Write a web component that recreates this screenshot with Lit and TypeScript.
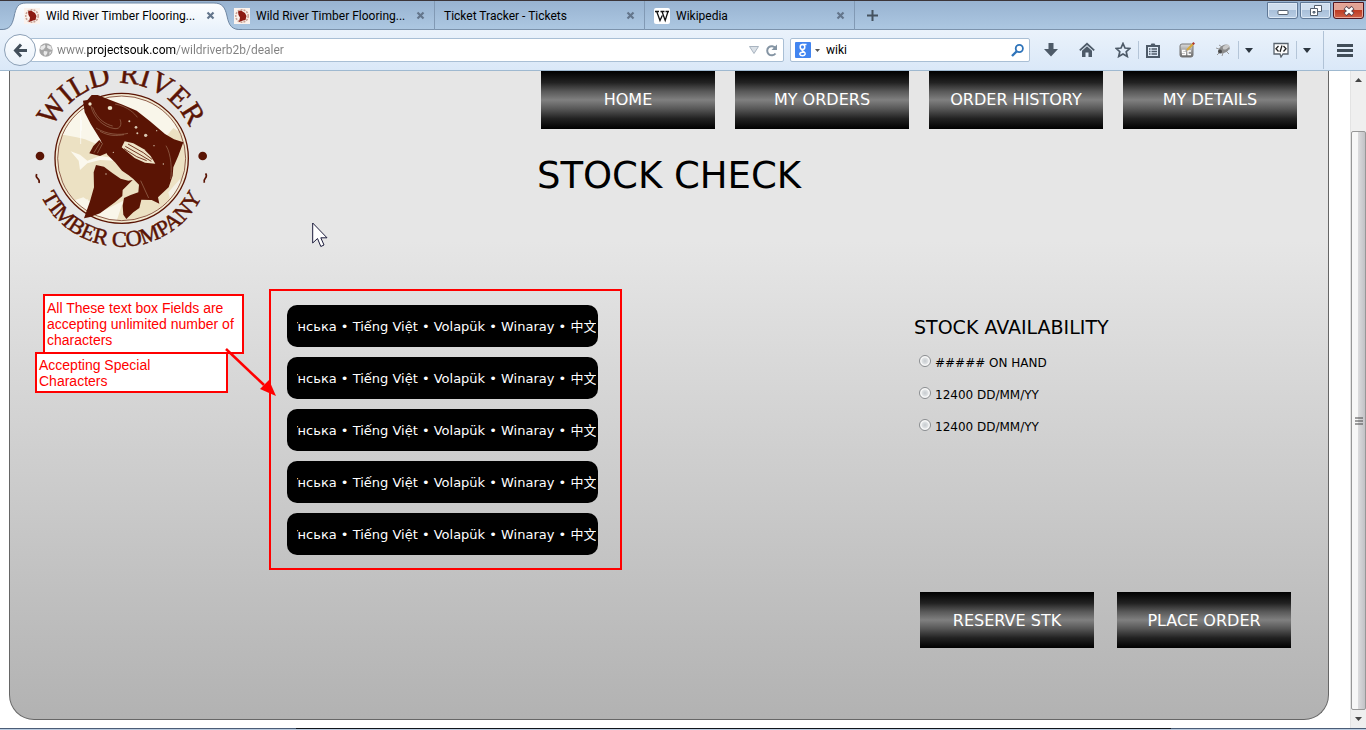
import { LitElement, html, css } from "lit";
import { customElement, state } from "lit/decorators.js";
import { styleMap } from "lit/directives/style-map.js";

const FIELD_VALUE = "Українська • Tiếng Việt • Volapük • Winaray • 中文";
const ADDRESS = ["www.", "projectsouk.com", "/wildriverb2b/dealer"];

const fishIcon = html`<svg class="favicon" viewBox="0 0 16 16" aria-hidden="true">
  <rect width="16" height="16" fill="#fbf3ee" />
  <circle cx="8" cy="8" r="6.2" fill="none" stroke="#c9a294" stroke-width="1.6" stroke-dasharray="2 1" />
  <path d="M4 3.500L7 2.500L11 5L12.500 8L11.500 12L9 12.500L5 14L6 9.500L4.500 7Z" fill="#8c1a12" />
</svg>`;

const wikiIcon = html`<svg class="favicon" viewBox="0 0 16 16" aria-hidden="true">
  <rect width="16" height="16" rx="2" fill="#fff" />
  <path d="M1 3.500H5M6.500 3.500H10.500M11.500 3.500H15M2.700 3.500L6 12.500L8.300 7.500M8 3.500L11.200 12.500L14 3.500" fill="none" stroke="#111" stroke-width="1.300" />
</svg>`;

const closeGlyph = html`<svg width="9" height="9" viewBox="0 0 9 9" aria-hidden="true">
  <path d="M1.500 1.500L7.500 7.500M7.500 1.500L1.500 7.500" stroke="#64768c" stroke-width="2.200" />
</svg>`;

@customElement("browser-tabs")
class BrowserTabs extends LitElement {
  static styles = css`
    :host {
      display: block;
      font: 12px/16px Roboto, "Noto Sans", sans-serif;
      color: #000;
    }
    * { box-sizing: border-box; }
    button { font: inherit; color: inherit; background: none; border: 0; padding: 0; }
    .strip {
      display: flex;
      height: 30px;
      padding: 0 2px 0 15px;
      border-top: 1px solid #3b3539;
      background: linear-gradient(#98b3d1, #adc8e2);
      box-shadow: inset 0 -1px #7c93ac;
    }
    .tab {
      display: flex;
      align-items: center;
      position: relative;
      width: 210px;
      padding: 0 10px 0 9px;
    }
    .tab.divided { box-shadow: inset -1px 0 #8199b4; }
    .shape { position: absolute; left: -15px; top: 1px; }
    .favicon { width: 16px; height: 16px; margin-right: 6px; flex: none; }
    .title {
      position: relative;
      display: flex;
      align-items: center;
      flex: 1;
      min-width: 0;
      text-align: left;
      white-space: nowrap;
    }
    .close { position: relative; display: flex; }
    .new { display: flex; align-items: center; padding: 0 12px; }
    .window { display: flex; gap: 2px; margin-left: auto; padding-top: 1px; align-items: flex-start; }
    .win {
      display: grid;
      place-items: center;
      width: 31px;
      height: 17px;
      border: 1px solid #5f7896;
      border-radius: 0 0 3px 3px;
      background: linear-gradient(#cfdeee 45%, #a9c0da 50%, #b9cee5);
      box-shadow: inset 0 0 0 1px #dce8f5;
    }
    .win.exit {
      border-color: #501620;
      background: linear-gradient(#e2a395 45%, #bf3b23 50%, #cf6148);
      box-shadow: inset 0 0 0 1px #eba89a;
    }
  `;

  private tab(title: string, icon: unknown, active = false, divided = true) {
    return html`<div class="tab ${divided ? "divided" : ""}">
      ${active
        ? html`<svg class="shape" width="242" height="28" viewBox="0 0 242 28" aria-hidden="true">
            <defs><linearGradient id="tabfill" x2="0" y2="1">
              <stop stop-color="#fdfeff" /><stop offset="1" stop-color="#e9f2fb" />
            </linearGradient></defs>
            <path d="M0 28C10 28 12 23 14 15C16 5 18 1 26 1H214C222 1 225 5 227 14C229 24 232 28 242 28Z" fill="url(#tabfill)" />
            <path d="M0 27.500C10 28 12 23 14 15C16 5 18 1 26 1H214C222 1 225 5 227 14C229 24 232 28 242 27.500" fill="none" stroke="#6f87a3" />
          </svg>`
        : ""}
      <button class="title">${icon}${title}</button>
      <button class="close" aria-label="Close tab">${closeGlyph}</button>
    </div>`;
  }

  render() {
    return html`<div class="strip">
      ${this.tab("Wild River Timber Flooring...", fishIcon, true, false)}
      ${this.tab("Wild River Timber Flooring...", fishIcon)}
      ${this.tab("Ticket Tracker - Tickets", "")}
      ${this.tab("Wikipedia", wikiIcon)}
      <button class="new" aria-label="New tab">
        <svg width="11" height="11" viewBox="0 0 11 11"><path d="M5.500 0V11M0 5.500H11" stroke="#45525f" stroke-width="2" /></svg>
      </button>
      <div class="window">
        <button class="win" aria-label="Minimize">
          <svg width="12" height="9" viewBox="0 0 12 9"><rect x="1" y="4.500" width="10" height="4" rx="1" fill="#fff" stroke="#55606e" /></svg>
        </button>
        <button class="win" aria-label="Restore">
          <svg width="12" height="11" viewBox="0 0 12 11" fill="#fff" stroke="#55606e">
            <path d="M4.500 .5H11.500V6.500H4.500Z" /><path d="M.5 3.500H7.500V10.500H.5Z" /><path d="M3 6.500H5V8H3Z" fill="#8ea6c0" />
          </svg>
        </button>
        <button class="win exit" aria-label="Close">
          <svg width="12" height="10" viewBox="0 0 12 10">
            <path d="M2 1.500L10 8.500M10 1.500L2 8.500" stroke="#5c4650" stroke-width="4.500" />
            <path d="M2.500 2L9.500 8M9.500 2L2.500 8" stroke="#fff" stroke-width="2.500" />
          </svg>
        </button>
      </div>
    </div>`;
  }
}

@customElement("browser-toolbar")
class BrowserToolbar extends LitElement {
  static styles = css`
    :host {
      display: block;
      position: relative;
      z-index: 2;
      font: 12px/16px Roboto, "Noto Sans", sans-serif;
    }
    * { box-sizing: border-box; }
    button { background: none; border: 0; padding: 0; display: flex; }
    .bar {
      display: flex;
      align-items: center;
      height: 41px;
      padding: 0 13px 0 4px;
      border-bottom: 1px solid #9fb9d0;
      background: linear-gradient(#eaf2fb, #dae8f8);
    }
    .back {
      position: relative;
      z-index: 1;
      align-items: center;
      justify-content: center;
      width: 32px;
      height: 32px;
      border: 1px solid #8ca0b6;
      border-radius: 50%;
      background: linear-gradient(#fdfeff, #e9f1fa);
    }
    .box {
      display: flex;
      align-items: center;
      height: 24px;
      border: 1px solid #a9bfd5;
      border-radius: 2px;
      background: #fff;
    }
    .location { flex: 1; margin-left: -6px; padding: 0 5px 0 8px; }
    .search { width: 240px; margin-left: 6px; padding: 0 5px 0 4px; }
    .text {
      flex: 1;
      min-width: 0;
      border: 0;
      padding: 0;
      outline: 0;
      height: 20px;
      font: inherit;
      background: none;
      color: #000;
    }
    .address {
      margin-left: 4px;
      color: transparent;
      background: linear-gradient(90deg, #808080 var(--from), #000 var(--from), #000 var(--to), #808080 var(--to));
      -webkit-background-clip: text;
      background-clip: text;
    }
    .reload { margin-left: 6px; }
    .engine { margin-right: 6px; align-items: center; gap: 4px; }
    .tools { display: flex; align-items: center; padding-left: 13px; }
    .tool { width: 16px; justify-content: center; margin-right: 20px; }
    .tool.snug { margin-right: 7px; }
    .tool.near { margin-right: 18px; }
    .rule { width: 1px; height: 18px; background: #b4c5d8; margin-right: 6px; }
    .drop { margin-right: 20px; }
    .drop.last { margin-right: 12px; }
    .menu { padding-left: 13px; height: 38px; align-items: center; border-left: 1px solid #b0c2d6; }
  `;

  @state() private from = 0;
  @state() private to = 0;

  connectedCallback() {
    super.connectedCallback();
    const pen = document.createElement("canvas").getContext("2d")!;
    pen.font = '12px Roboto, "Noto Sans", sans-serif';
    this.from = pen.measureText(ADDRESS[0]).width;
    this.to = pen.measureText(ADDRESS[0] + ADDRESS[1]).width;
  }

  render() {
    const ink = "#4d5a68";
    return html`<div class="bar">
      <button class="back" aria-label="Back">
        <svg width="15" height="15" viewBox="0 0 15 15" fill="none" stroke="#434f5b" stroke-width="3"><path d="M8 1.500L2.500 7.500L8 13.500M3 7.500H14" /></svg>
      </button>
      <div class="box location">
        <svg width="14" height="14" viewBox="0 0 14 14" aria-hidden="true">
          <circle cx="7" cy="7" r="6.700" fill="#a5a5a5" />
          <path d="M2 3.500L6 1.500L6.500 4L4.500 6.500L2.500 7L1 5.500ZM8.500 2L12 3.500L13 7L10 6L8 4.500ZM5 8L8.500 8.500L8 11L6 13L4.500 10.500ZM10.500 9L12.500 8.500L10.500 12Z" fill="#e9e9e9" />
        </svg>
        <input
          class="text address"
          aria-label="Address"
          .value=${ADDRESS.join("")}
          style=${styleMap({ "--from": `${this.from}px`, "--to": `${this.to}px` })}
        />
        <svg width="10" height="8" viewBox="0 0 10 8" aria-hidden="true"><path d="M.5 .5H9.500L5 7.500Z" fill="#dbe1e7" stroke="#a9b4c0" /></svg>
        <button class="reload" aria-label="Reload">
          <svg width="13" height="13" viewBox="0 0 13 13"><path d="M10.500 4A4.600 4.600 0 1 0 10.500 9.500" fill="none" stroke="#8494a3" stroke-width="2" /><path d="M12 .5V6H6.500Z" fill="#8494a3" /></svg>
        </button>
      </div>
      <div class="box search">
        <button class="engine" aria-label="Search engine">
          <svg width="16" height="16" viewBox="0 0 16 16">
            <rect width="16" height="16" rx="1" fill="#4285f0" />
            <g fill="none" stroke="#fff" stroke-width="1.500"><ellipse cx="7.500" cy="5" rx="2.300" ry="2.500" /><path d="M7.500 2.500H11.500M8 7.500C6 8.500 7.500 9 9 9.800C11 11 10.500 13.700 7.500 13.700C4.500 13.700 4 11.500 6 10.500C7 10 8 10 9 10" /></g>
          </svg>
          <svg width="5" height="3" viewBox="0 0 5 3"><path d="M0 0H5L2.500 3Z" fill="#555" /></svg>
        </button>
        <input class="text" aria-label="Search" value="wiki" />
        <button aria-label="Go">
          <svg width="13" height="13" viewBox="0 0 13 13" fill="none" stroke="#2f74ba"><circle cx="8.300" cy="4.500" r="3.600" stroke-width="1.800" /><path d="M5.500 7.500L1 12" stroke-width="2.400" /></svg>
        </button>
      </div>
      <div class="tools">
        <button class="tool" aria-label="Downloads"><svg width="14" height="14" viewBox="0 0 14 14"><path d="M4.500 0H9.500V6H14L7 13.500L0 6H4.500Z" fill="${ink}" /></svg></button>
        <button class="tool" aria-label="Home"><svg width="16" height="16" viewBox="0 0 16 16"><path d="M.8 8.300L8 1.800L15.200 8.300" fill="none" stroke="${ink}" stroke-width="1.800" /><path d="M3 8.800L8 4.300L13 8.800V15H9.500V10.500H6.500V15H3Z" fill="${ink}" /></svg></button>
        <button class="tool snug" aria-label="Bookmark"><svg width="16" height="16" viewBox="0 0 16 16"><path d="M8 1.500L10 6L14.800 6.500L11.200 9.700L12.300 14.500L8 12L3.700 14.500L4.800 9.700L1.200 6.500L6 6Z" fill="none" stroke="${ink}" stroke-width="1.700" /></svg></button>
        <span class="rule"></span>
        <button class="tool near" aria-label="Bookmarks list"><svg width="14" height="15" viewBox="0 0 14 15"><path d="M1 3H13V14H1Z" fill="none" stroke="${ink}" stroke-width="2" /><path d="M4 3L5.500 .5H8.500L10 3Z" fill="${ink}" /><path d="M3 6H4.500M5.500 6H11M3 8.500H4.500M5.500 8.500H11M3 11H4.500M5.500 11H11" stroke="${ink}" stroke-width="1.400" /></svg></button>
        <button class="tool" aria-label="Script editor"><svg width="16" height="16" viewBox="0 0 16 16">
          <defs><linearGradient id="sc" x2="0" y2="1"><stop stop-color="#ddd" /><stop offset="1" stop-color="#666" /></linearGradient></defs>
          <rect x="1" y="2" width="13" height="13" rx="2" fill="url(#sc)" stroke="#777" />
          <path d="M6.500 8.500H3.500V10.500H6.500V12.500H3M12 9H9V12.500H12" fill="none" stroke="#fff" stroke-width="1.300" />
          <path d="M8 8L14.500 1.500" stroke="#d8a93c" stroke-width="2.200" /><path d="M13.800 2.200L15.200 .8" stroke="#a33" stroke-width="2.200" />
        </svg></button>
        <button class="tool snug" aria-label="Firebug"><svg width="16" height="14" viewBox="0 0 16 14">
          <path d="M4 6L1 5M5 9L2 12M8 10L7 13M11 8L14 11M12 5L15 6M7 4L4 2" stroke="#999" />
          <ellipse cx="9" cy="6" rx="6" ry="3.800" fill="#8c8c8c" transform="rotate(-30 9 6)" />
          <ellipse cx="11" cy="4" rx="3.500" ry="2" fill="#c9c9c9" transform="rotate(-30 11 4)" /><circle cx="5" cy="8.500" r="2" fill="#4b4b4b" />
        </svg></button>
        <span class="rule"></span>
        <button class="drop" aria-label="Firebug menu"><svg width="8" height="5" viewBox="0 0 8 5"><path d="M0 0H8L4 5Z" fill="#2c3640" /></svg></button>
        <button class="tool snug" aria-label="Developer tools"><svg width="16" height="16" viewBox="0 0 16 16"><path d="M1 1.500H15V12H10L8 15L7 12H1Z" fill="#fff" stroke="#59636d" stroke-width="1.300" /><path d="M5.500 4L3 6.800L5.500 9.500M10.500 4L13 6.800L10.500 9.500M9 3.500L7 10" fill="none" stroke="#222" stroke-width="1.300" /></svg></button>
        <span class="rule"></span>
        <button class="drop last" aria-label="Developer menu"><svg width="8" height="5" viewBox="0 0 8 5"><path d="M0 0H8L4 5Z" fill="#2c3640" /></svg></button>
        <button class="menu" aria-label="Menu"><svg width="16" height="13" viewBox="0 0 16 13"><path d="M0 1.500H16M0 6.500H16M0 11.500H16" stroke="#414d59" stroke-width="3" /></svg></button>
      </div>
    </div>`;
  }
}

@customElement("company-logo")
class CompanyLogo extends LitElement {
  static styles = css`
    :host { display: block; }
    .logo { display: block; width: 180px; height: 180px; overflow: visible; }
    .name { font-family: "Liberation Serif", serif; font-size: 88px; }
    .kind { font-family: "Liberation Serif", serif; font-size: 67px; }
  `;

  render() {
    return html`<svg class="logo" viewBox="90 21 540 540" role="img" aria-label="Wild River Timber Company">
      <defs>
        <path id="upper" d="M148 349A225 225 0 1 1 578 349" />
        <path id="lower" d="M97 280A268 268 0 0 0 633 280" />
        <clipPath id="disc"><ellipse cx="365" cy="283" rx="191" ry="186" /></clipPath>
      </defs>
      <ellipse cx="365" cy="283" rx="200" ry="195" fill="#f3ead2" stroke="#5a1404" stroke-width="4" />
      <g clip-path="url(#disc)">
        <ellipse cx="365" cy="283" rx="191" ry="186" fill="#f9f6ea" />
        <path d="M160 232L190 212L230 220L255 226L290 240L360 232L400 250L500 215L520 192L540 205L580 250V360L540 430L470 462L380 482L350 470L370 410L310 440L250 400L190 420L160 330Z" fill="#ece1c3" />
        <path d="M212 262L240 272L262 290L300 276L340 282L350 290L300 288L262 298L240 318L236 290Z" fill="#fbf8ee" />
        <path d="M205 430L265 405L240 470Z" fill="#f9f6ea" />
        <path d="M540 345L505 385L515 425L550 390Z" fill="#f4f1e6" />
      </g>
      <ellipse cx="365" cy="283" rx="192" ry="187" fill="none" stroke="#5a1404" stroke-width="2" />
      <path d="M249 110L262 108L275 93L293 93L325 106L368 122L410 140L450 172L495 210L522 226L550 235L535 275L520 310L518 335L506 370L474 400L478 419L455 408L424 407L418 432L400 445L379 465L370 452L368 425L372 402L392 393L415 385L417 362L400 345L386 334L366 320L345 295L322 272L300 225L272 180L254 145Z" fill="#5a1404" />
      <path d="M288 303L312 308L338 328L362 344L385 350L398 348L368 378L367 396L345 415L300 448L270 459L252 463L270 412L282 370L281 325Z" fill="#5a1404" />
      <path d="M298 228L280 246L268 268L300 276L328 264Z" fill="#5a1404" />
      <path d="M365 250L374 232L400 238L432 256L452 276L466 299L435 296L404 282Z" fill="#efe4c8" />
      <path d="M376 247L420 272L454 292M372 254L410 278L440 290M384 240L430 266L456 286" fill="none" stroke="#5a1404" stroke-width="2.500" />
      <ellipse cx="330" cy="132" rx="7" ry="6" fill="#efe4c8" />
      <circle cx="270" cy="120" r="5" fill="#efe4c8" />
      <g fill="none" stroke="#9c6f58" stroke-width="2">
        <path d="M273 126C280 160 310 190 345 194C362 195 366 180 360 166M278 130C292 168 320 182 338 186M288 192C320 212 360 214 384 208M300 202C330 218 350 215 372 212M345 120C385 128 405 150 412 160" />
        <path d="M498 245C514 270 516 320 512 345M422 350L446 402M300 236L282 266M308 238L292 268" />
      </g>
      <path d="M242 150V240M244 168V200" stroke="#fff" stroke-width="2" />
      <g fill="#d9c9b4"><circle cx="408" cy="190" r="4" /><circle cx="437" cy="214" r="5" /><circle cx="388" cy="172" r="3" /><circle cx="412" cy="208" r="3" /><circle cx="470" cy="200" r="2" /><circle cx="340" cy="265" r="2" /><circle cx="318" cy="330" r="2" /><circle cx="490" cy="300" r="2" /><circle cx="462" cy="245" r="2" /></g>
      <g fill="#5a1404">
        <circle cx="120" cy="276" r="13" /><circle cx="608" cy="276" r="13" />
        <g stroke="#5a1404" stroke-width="1.500">
          <text class="name"><textPath href="#upper" startOffset="50%" text-anchor="middle">WILD RIVER</textPath></text>
          <text class="kind"><textPath href="#lower" startOffset="50%" text-anchor="middle">TIMBER COMPANY</textPath></text>
        </g>
      </g>
      <g fill="none" stroke="#5a1404" stroke-width="5"><path d="M110 330C103 346 122 340 117 357" /><path d="M617 328C626 344 608 340 613 356" /></g>
    </svg>`;
  }
}

@customElement("stock-page")
class StockPage extends LitElement {
  static styles = css`
    :host {
      display: flex;
      flex: 1;
      min-width: 0;
      padding: 0 21px 8px 9px;
      background: #fff;
      font: 13px/16px Verdana, "DejaVu Sans", sans-serif;
      color: #000;
    }
    * { box-sizing: border-box; }
    .panel {
      position: relative;
      flex: 1;
      display: flex;
      flex-direction: column;
      border: 1px solid #666;
      border-top: 0;
      border-radius: 0 0 25px 25px;
      background: linear-gradient(#e6e6e6 170px, #b2b2b2);
    }
    .head { display: grid; grid-template: 58px 122px / 180px 1fr; padding: 0 31px 0 20px; }
    .mark { grid-area: 1 / 1 / 3 / 2; }
    .nav { grid-area: 1 / 2; display: flex; gap: 20px; justify-content: flex-end; }
    .metal {
      display: flex;
      align-items: center;
      justify-content: center;
      width: 174px;
      height: 56px;
      padding: 2px 0 0;
      border: 0;
      font: 16px/20px Verdana, "DejaVu Sans", sans-serif;
      color: #fff;
      text-decoration: none;
      background: linear-gradient(#000, #222 20%, #585858 35%, #808080 50%, #585858 65%, #222 82%, #000);
    }
    .nav .metal { height: 58px; padding: 0; }
    .title { margin: 0; grid-area: 2 / 1 / 3 / 3; padding: 25px 0 0 11px; text-align: center; font-weight: 400; font-size: 37px; line-height: 44px; }
    .body { display: grid; grid-template-columns: 277fr 311fr 316fr 414fr; padding-top: 54px; }
    .fields { grid-column: 2; position: relative; display: flex; flex-direction: column; gap: 10px; }
    .field {
      width: 100%;
      height: 42px;
      padding: 0 2px 2px 10px;
      border: 0;
      border-radius: 10px;
      outline: 0;
      background: #000;
      color: #fff;
      font: 13px/16px Verdana, "DejaVu Sans", "Noto Sans CJK SC", sans-serif;
    }
    .stock { grid-column: 4; padding: 10px 0 0; min-width: 0; }
    .legend { margin: 0 0 14px; font-size: 19px; line-height: 24px; font-weight: 400; }
    .choice { display: flex; gap: 4px; height: 32px; padding-left: 5px; font-size: 12px; line-height: 20px; }
    .radio {
      appearance: none;
      width: 12px;
      height: 12px;
      margin: 2px 0 0;
      border: 1px solid #8a8d90;
      border-radius: 50%;
      background: radial-gradient(circle, #c6cace 0, #dfe2e4 3px, #f8f8f8 4px);
    }
    .actions { display: flex; gap: 23px; justify-content: flex-end; padding: 37px 37px 71px; }
    .frame { position: absolute; inset: -16px -24px -15px -18px; border: 2px solid #f00; pointer-events: none; }
    .note {
      position: absolute;
      margin: 0;
      padding: 4px 2px;
      border: 2px solid #f00;
      background: #fff;
      color: #f00;
      font: 14px/16px "Liberation Sans", Arial, sans-serif;
    }
    .limit { left: -244px; top: -11px; width: 201px; height: 60px; }
    .special { left: -252px; top: 47px; width: 193px; height: 41px; padding-top: 3px; }
    .arrow { position: absolute; left: -63px; top: 41px; }
    .pointer { position: absolute; left: 302px; top: 151px; }
  `;

  firstUpdated() {
    this.renderRoot.querySelectorAll<HTMLInputElement>(".field").forEach((f) => {
      f.scrollLeft = f.scrollWidth;
    });
  }

  render() {
    return html`<div class="panel">
      <header class="head">
        <company-logo class="mark"></company-logo>
        <nav class="nav">
          ${["HOME", "MY ORDERS", "ORDER HISTORY", "MY DETAILS"].map((t) => html`<a class="metal" href="#">${t}</a>`)}
        </nav>
        <h1 class="title">STOCK CHECK</h1>
      </header>
      <div class="body">
        <div class="fields">
          ${[1, 2, 3, 4, 5].map((n) => html`<input class="field" aria-label="Field ${n}" .value=${FIELD_VALUE} />`)}
          <div class="frame"></div>
          <p class="note limit">All These text box Fields are accepting unlimited number of characters</p>
          <p class="note special">Accepting Special<br />Characters</p>
          <svg class="arrow" width="54" height="52" viewBox="0 0 54 52" aria-hidden="true">
            <path d="M2 3L40 39" stroke="#f00" stroke-width="2.500" /><path d="M52 50L36 43L45 34Z" fill="#f00" />
          </svg>
        </div>
        <section class="stock">
          <h2 class="legend">STOCK AVAILABILITY</h2>
          ${["##### ON HAND", "12400 DD/MM/YY", "12400 DD/MM/YY"].map(
            (t) => html`<label class="choice"><input class="radio" type="radio" name="stock" />${t}</label>`
          )}
        </section>
      </div>
      <div class="actions">
        <button class="metal">RESERVE STK</button>
        <button class="metal">PLACE ORDER</button>
      </div>
      <svg class="pointer" width="17" height="26" viewBox="0 0 17 26" aria-hidden="true">
        <path d="M.7 1V21L5.500 16.500L8.800 24.500L12 23L8.800 15.800H15Z" fill="#fff" stroke="#1c1c3c" />
      </svg>
    </div>`;
  }
}

@customElement("app-root")
class AppRoot extends LitElement {
  static styles = css`
    :host { display: flex; flex-direction: column; min-height: 100vh; background: #fff; }
    * { box-sizing: border-box; }
    .view { display: flex; flex: 1; }
    .scroll {
      display: flex;
      flex-direction: column;
      width: 16px;
      background: #efefef;
      border-left: 1px solid #e3e3e3;
    }
    .step { display: grid; place-items: center; height: 18px; padding: 0; border: 0; background: none; }
    .thumb {
      flex: 1;
      display: grid;
      place-items: center;
      margin-top: 42px;
      border: 1px solid #979797;
      border-radius: 2px;
      background: linear-gradient(90deg, #f7f7f7 45%, #dadadc 50%, #c2c2c6);
    }
    .task {
      height: 2px;
      background:
        linear-gradient(90deg, #4b5d76 296px, #10151c 296px, #10151c 1171px, #4b5d76 1171px) top / 100% 1px no-repeat,
        #b9cbe0;
    }
  `;

  render() {
    return html`
      <browser-tabs></browser-tabs>
      <browser-toolbar></browser-toolbar>
      <div class="view">
        <stock-page></stock-page>
        <div class="scroll">
          <button class="step" aria-label="Scroll up"><svg width="7" height="4" viewBox="0 0 7 4"><path d="M0 4H7L3.500 0Z" fill="#444" /></svg></button>
          <div class="thumb"><svg width="8" height="8" viewBox="0 0 8 8"><path d="M0 1H8M0 4H8M0 7H8" stroke="#444" /></svg></div>
          <button class="step" aria-label="Scroll down"><svg width="7" height="4" viewBox="0 0 7 4"><path d="M0 0H7L3.500 4Z" fill="#444" /></svg></button>
        </div>
      </div>
      <div class="task"></div>
    `;
  }
}
